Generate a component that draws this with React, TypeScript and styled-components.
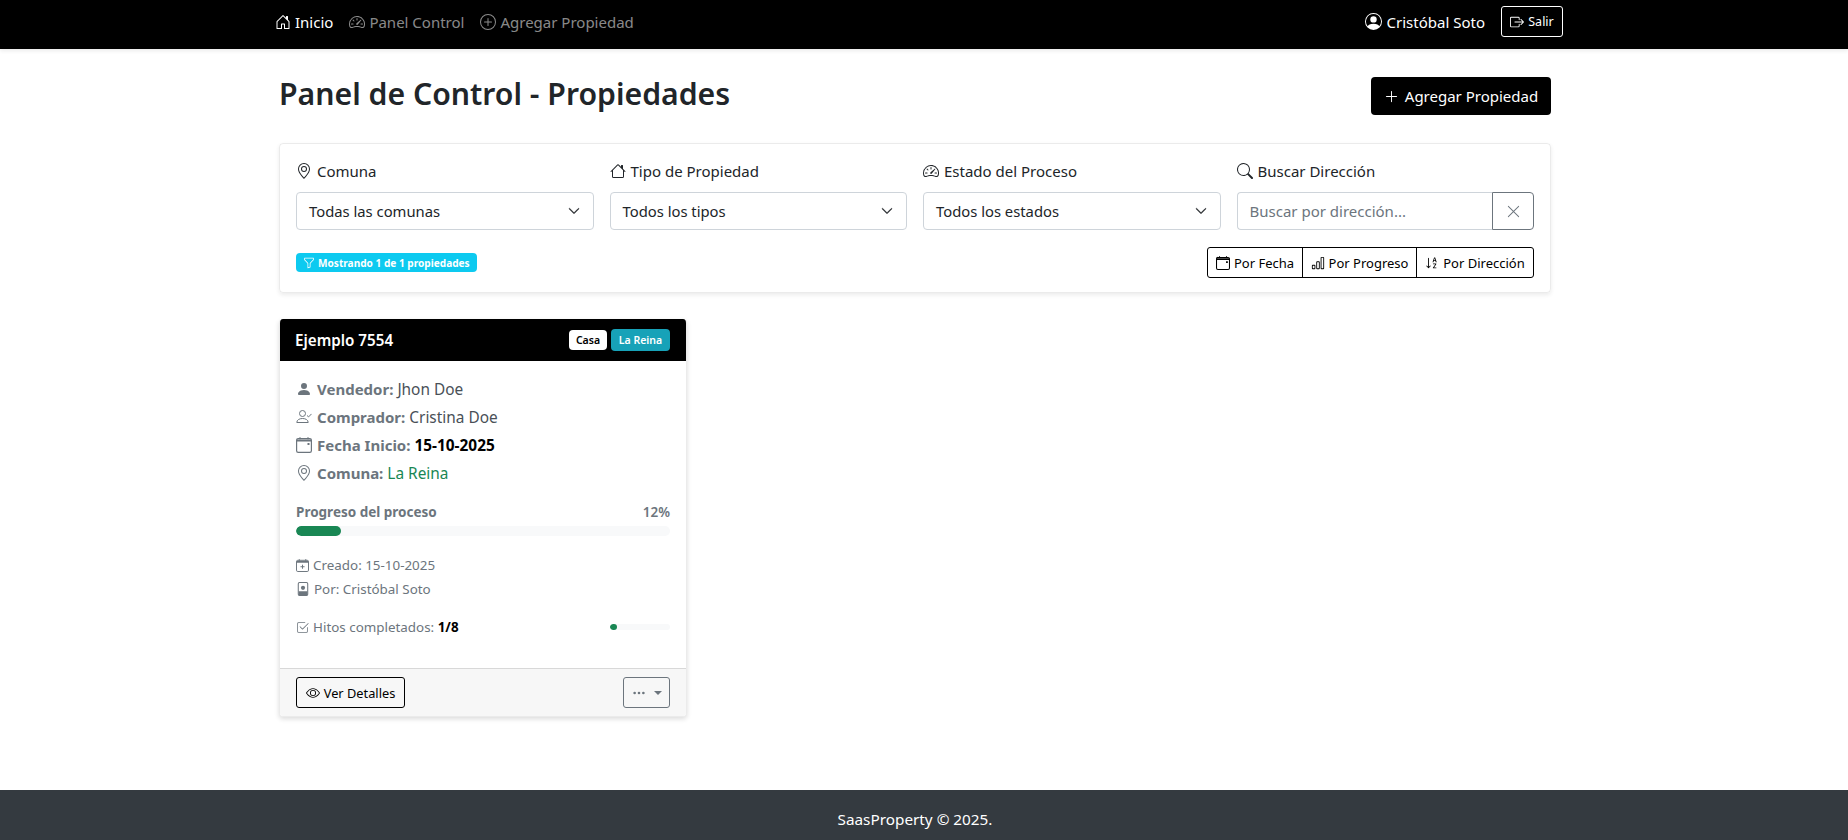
import React from 'react';
import styled, { createGlobalStyle } from 'styled-components';
import {
  BsBarChart,
  BsBoxArrowRight,
  BsCheck2Square,
  BsChevronDown,
  BsEye,
  BsFunnel,
  BsGeoAlt,
  BsHouse,
  BsHouseDoor,
  BsPersonCircle,
  BsPersonFill,
  BsPlusCircle,
  BsPlusLg,
  BsSearch,
  BsSortAlphaDown,
  BsSpeedometer2,
  BsThreeDots,
  BsXLg,
} from 'react-icons/bs';

const colors = {
  black: '#000',
  text: '#212529',
  muted: '#6c757d',
  border: '#ced4da',
  success: '#198754',
  track: '#f8f9fa',
};

const GlobalStyle = createGlobalStyle`
  * { box-sizing: border-box; }
  html, body { margin: 0; padding: 0; height: 100%; }
  body {
    font-family: "Noto Sans", "Open Sans", "Liberation Sans", sans-serif;
    font-size: 15px;
    color: ${colors.text};
    background: #fff;
  }
  #root { height: 840px; }
`;

type IconProps = { size: number };

// the calendar in the reference has a heavy top band, which the package's one lacks
function CalendarIcon({ size }: IconProps) {
  return (
    <svg width={size} height={size} viewBox="0 0 16 16" fill="none" stroke="currentColor">
      <rect x="0.6" y="1.6" width="14.8" height="13.8" rx="1.6" strokeWidth="1.2" />
      <path d="M0.6 3.6h14.8" strokeWidth="2" />
      <path d="M4 0.2v2M12 0.2v2" strokeWidth="1.2" />
      <path d="M11.5 6h2v2h-2z" fill="currentColor" stroke="none" />
    </svg>
  );
}

function CalendarPlusIcon({ size }: IconProps) {
  return (
    <svg width={size} height={size} viewBox="0 0 16 16" fill="none" stroke="currentColor">
      <rect x="0.6" y="1.6" width="14.8" height="13.8" rx="1.6" strokeWidth="1.2" />
      <path d="M0.6 3.6h14.8" strokeWidth="2" />
      <path d="M4 0.2v2M12 0.2v2" strokeWidth="1.2" />
      <path d="M8 7v5M5.5 9.5h5" strokeWidth="1.2" />
    </svg>
  );
}

function PersonCheckIcon({ size }: IconProps) {
  return (
    <svg width={size} height={size} viewBox="0 0 16 16" fill="none" stroke="currentColor" strokeWidth="1">
      <circle cx="6.5" cy="4.5" r="3" />
      <path d="M0.8 13.5c0-2.6 2.6-4 5.7-4s5.7 1.4 5.7 4z" />
      <path d="M11 6.5l1.6 1.4 2.9-3" />
    </svg>
  );
}

function PersonPortraitIcon({ size }: IconProps) {
  return (
    <svg width={size} height={size} viewBox="0 0 16 16" fill="none" stroke="currentColor">
      <rect x="2.6" y="0.6" width="10.8" height="14.8" rx="1.4" strokeWidth="1.2" />
      <circle cx="8" cy="6.6" r="2.4" fill="currentColor" stroke="none" />
      <path d="M3 10.5h10v4.5H3z" fill="currentColor" stroke="none" />
    </svg>
  );
}

const Page = styled.div`
  display: flex;
  flex-direction: column;
  height: 840px;
`;

const Navbar = styled.nav`
  height: 49px;
  background: ${colors.black};
  box-shadow: 0 2px 4px rgba(0, 0, 0, 0.08);
  padding: 0 285px 6px 267px;
  display: flex;
  align-items: center;
  justify-content: space-between;
`;

const NavGroup = styled.div`
  display: flex;
  align-items: center;
`;

const NavLink = styled.a<{ $active?: boolean }>`
  display: flex;
  align-items: center;
  gap: 4px;
  padding: 0 8px;
  color: ${(p) => (p.$active ? '#fff' : 'rgba(255,255,255,.55)')};
  white-space: nowrap;
`;

const UserName = styled.span`
  display: flex;
  align-items: center;
  gap: 5px;
  color: #fff;
  margin-right: 16px;
`;

const LogoutButton = styled.button`
  height: 31px;
  width: 62px;
  display: flex;
  align-items: center;
  justify-content: center;
  gap: 4px;
  background: transparent;
  border: 1px solid #fff;
  border-radius: 3px;
  color: #fff;
  font: inherit;
  font-size: 12.5px;
  padding: 0;
`;

const Main = styled.main`
  flex: 1;
  padding: 28px 297px 0 279px;
`;

const TitleRow = styled.div`
  display: flex;
  align-items: center;
  justify-content: space-between;
  height: 38px;
  margin-bottom: 28px;
`;

const Title = styled.h1`
  margin: 0 0 4px;
  font-size: 30.2px;
  font-weight: 600;
  line-height: 1.2;
`;

const PrimaryButton = styled.button`
  width: 180px;
  height: 38px;
  display: flex;
  align-items: center;
  justify-content: center;
  gap: 6px;
  background: ${colors.black};
  color: #fff;
  border: 0;
  border-radius: 4px;
  font: inherit;
  padding: 0;
`;

const FilterPanel = styled.section`
  height: 150px;
  border: 1px solid rgba(0, 0, 0, 0.08);
  border-radius: 4px;
  box-shadow: 0 2px 4px rgba(0, 0, 0, 0.08);
  padding: 16px;
`;

const FilterGrid = styled.div`
  display: grid;
  grid-template-columns: repeat(4, 1fr);
  column-gap: 16px;
`;

const FilterLabel = styled.label`
  display: flex;
  align-items: center;
  gap: 5px;
  height: 24px;
  margin-top: -1px;
  margin-bottom: 9px;
  font-size: 15px;
`;

const SelectBox = styled.div`
  height: 38px;
  display: flex;
  align-items: center;
  justify-content: space-between;
  padding: 0 13px 0 12px;
  border: 1px solid ${colors.border};
  border-radius: 4px;
  font-size: 14.8px;

  svg {
    stroke: currentColor;
    stroke-width: 0.8;
  }
`;

const SearchGroup = styled.div`
  display: flex;
  height: 38px;
`;

const SearchInput = styled.div`
  flex: 1;
  display: flex;
  align-items: center;
  padding: 0 12px;
  border: 1px solid ${colors.border};
  border-right: 0;
  border-radius: 4px 0 0 4px;
  color: ${colors.muted};
`;

const ClearButton = styled.button`
  width: 42px;
  display: flex;
  align-items: center;
  justify-content: center;
  background: #fff;
  border: 1px solid ${colors.muted};
  border-radius: 0 4px 4px 0;
  color: ${colors.muted};
  padding: 0;
`;

const FilterFooter = styled.div`
  display: flex;
  align-items: center;
  justify-content: space-between;
  margin-top: 17px;
`;

const InfoBadge = styled.span`
  display: flex;
  align-items: center;
  gap: 3px;
  width: 181px;
  height: 19px;
  padding-left: 7px;
  background: #0dcaf0;
  border-radius: 4px;
  color: #fff;
  font-size: 10.1px;
  font-weight: 700;
  white-space: nowrap;
`;

const SortGroup = styled.div`
  display: flex;
  height: 31px;
  border: 1px solid ${colors.black};
  border-radius: 3px;
`;

const SortButton = styled.button<{ $width: number }>`
  width: ${(p) => p.$width}px;
  display: flex;
  align-items: center;
  justify-content: center;
  gap: 4px;
  background: transparent;
  border: 0;
  border-left: 1px solid ${colors.black};
  color: ${colors.black};
  font: inherit;
  font-size: 13px;
  padding: 0;
  white-space: nowrap;

  &:first-child {
    border-left: 0;
  }
`;

const Card = styled.article`
  width: 408px;
  height: 398px;
  margin-top: 26px;
  display: flex;
  flex-direction: column;
  border-radius: 4px;
  overflow: hidden;
  border: 1px solid rgba(0, 0, 0, 0.08);
  border-top: 0;
  box-shadow: 0 2px 5px rgba(0, 0, 0, 0.14);
`;

const CardHeader = styled.header`
  height: 42px;
  background: ${colors.black};
  display: flex;
  align-items: center;
  justify-content: space-between;
  padding: 0 16px 0 15px;
`;

const CardTitle = styled.h5`
  margin: 0 0 1px;
  color: #fff;
  font-size: 15.2px;
  font-weight: 600;
`;

const BadgeRow = styled.div`
  display: flex;
  align-items: center;
  gap: 4px;
`;

const Tag = styled.span<{ $bg: string; $fg: string; $width: number; $height: number }>`
  display: flex;
  align-items: center;
  justify-content: center;
  width: ${(p) => p.$width}px;
  height: ${(p) => p.$height}px;
  background: ${(p) => p.$bg};
  color: ${(p) => p.$fg};
  border-radius: 4px;
  font-size: 10.5px;
  font-weight: 600;
`;

const CardBody = styled.div`
  flex: 1;
  padding: 14px 16px 0;
`;

const InfoRow = styled.div`
  display: flex;
  align-items: center;
  gap: 5px;
  height: 28px;
  color: ${colors.muted};
  white-space: pre;
  font-size: 15.4px;
`;

const InfoKey = styled.strong`
  font-weight: 700;
  font-size: 15px;
`;

const InfoValue = styled.span<{ $color?: string; $bold?: boolean }>`
  color: ${(p) => p.$color ?? '#495057'};
  font-weight: ${(p) => (p.$bold ? 700 : 400)};
`;

const ProgressHead = styled.div`
  display: flex;
  justify-content: space-between;
  align-items: center;
  height: 20px;
  margin-top: 15px;
  color: ${colors.muted};
  font-size: 13.5px;
  font-weight: 700;
`;

const ProgressValue = styled.span`
  font-weight: 600;
`;

const Track = styled.div<{ $height: number }>`
  height: ${(p) => p.$height}px;
  border-radius: ${(p) => p.$height / 2}px;
  background: ${colors.track};
  overflow: hidden;
`;

const Fill = styled.div`
  height: 100%;
  border-radius: inherit;
  background: ${colors.success};
`;

const MainTrack = styled(Track)`
  margin-top: 4px;
  margin-bottom: 17px;
`;

const MetaRow = styled.div`
  display: flex;
  align-items: center;
  gap: 4px;
  height: 24px;
  color: ${colors.muted};
  font-size: 13.4px;
`;

const MilestoneRow = styled(MetaRow)`
  justify-content: space-between;
  margin-top: 14px;
`;

const MilestoneText = styled.span`
  display: flex;
  align-items: center;
  gap: 4px;
  white-space: pre;
`;

const MiniTrack = styled(Track)`
  width: 60px;
`;

const CardFooter = styled.footer`
  height: 48px;
  display: flex;
  align-items: center;
  justify-content: space-between;
  padding: 0 16px;
  background: #f7f7f7;
  border-top: 1px solid #d8d8d8;
`;

const OutlineButton = styled.button`
  width: 109px;
  height: 31px;
  display: flex;
  align-items: center;
  justify-content: center;
  gap: 4px;
  background: transparent;
  border: 1px solid ${colors.black};
  border-radius: 3px;
  color: ${colors.black};
  font: inherit;
  font-size: 12.8px;
  padding: 0;
`;

const MoreButton = styled.button`
  width: 47px;
  height: 31px;
  display: flex;
  align-items: center;
  justify-content: center;
  gap: 8px;
  background: transparent;
  border: 1px solid ${colors.muted};
  border-radius: 3px;
  color: ${colors.muted};
  padding: 0;
`;

const Caret = styled.span`
  width: 0;
  height: 0;
  border-left: 4px solid transparent;
  border-right: 4px solid transparent;
  border-top: 4px solid ${colors.muted};
`;

const PageFooter = styled.footer`
  height: 50px;
  background: #343a40;
  color: #fff;
  display: flex;
  align-items: center;
  justify-content: center;
  padding: 7px 18px 0 0;
  font-size: 15.3px;
`;

export default function App() {
  return (
    <Page>
      <GlobalStyle />
      <Navbar>
        <NavGroup>
          <NavLink $active>
            <BsHouseDoor size={16} />
            Inicio
          </NavLink>
          <NavLink>
            <BsSpeedometer2 size={16} />
            Panel Control
          </NavLink>
          <NavLink>
            <BsPlusCircle size={16} />
            Agregar Propiedad
          </NavLink>
        </NavGroup>
        <NavGroup>
          <UserName>
            <BsPersonCircle size={17} />
            Cristóbal Soto
          </UserName>
          <LogoutButton>
            <BsBoxArrowRight size={14} />
            Salir
          </LogoutButton>
        </NavGroup>
      </Navbar>

      <Main>
        <TitleRow>
          <Title>Panel de Control - Propiedades</Title>
          <PrimaryButton>
            <BsPlusLg size={15} />
            Agregar Propiedad
          </PrimaryButton>
        </TitleRow>

        <FilterPanel>
          <FilterGrid>
            <div>
              <FilterLabel>
                <BsGeoAlt size={16} />
                Comuna
              </FilterLabel>
              <SelectBox>
                Todas las comunas
                <BsChevronDown size={12} />
              </SelectBox>
            </div>
            <div>
              <FilterLabel>
                <BsHouse size={16} />
                Tipo de Propiedad
              </FilterLabel>
              <SelectBox>
                Todos los tipos
                <BsChevronDown size={12} />
              </SelectBox>
            </div>
            <div>
              <FilterLabel>
                <BsSpeedometer2 size={16} />
                Estado del Proceso
              </FilterLabel>
              <SelectBox>
                Todos los estados
                <BsChevronDown size={12} />
              </SelectBox>
            </div>
            <div>
              <FilterLabel>
                <BsSearch size={16} />
                Buscar Dirección
              </FilterLabel>
              <SearchGroup>
                <SearchInput>Buscar por dirección...</SearchInput>
                <ClearButton>
                  <BsXLg size={15} />
                </ClearButton>
              </SearchGroup>
            </div>
          </FilterGrid>
          <FilterFooter>
            <InfoBadge>
              <BsFunnel size={12} />
              Mostrando 1 de 1 propiedades
            </InfoBadge>
            <SortGroup>
              <SortButton $width={94}>
                <CalendarIcon size={14} />
                Por Fecha
              </SortButton>
              <SortButton $width={114}>
                <BsBarChart size={14} />
                Por Progreso
              </SortButton>
              <SortButton $width={117}>
                <BsSortAlphaDown size={14} />
                Por Dirección
              </SortButton>
            </SortGroup>
          </FilterFooter>
        </FilterPanel>

        <Card>
          <CardHeader>
            <CardTitle>Ejemplo 7554</CardTitle>
            <BadgeRow>
              <Tag $bg="#fff" $fg="#000" $width={38} $height={20}>
                Casa
              </Tag>
              <Tag $bg="#17a2b8" $fg="#fff" $width={59} $height={22}>
                La Reina
              </Tag>
            </BadgeRow>
          </CardHeader>
          <CardBody>
            <InfoRow>
              <BsPersonFill size={16} />
              <span>
                <InfoKey>Vendedor:</InfoKey> <InfoValue>Jhon Doe</InfoValue>
              </span>
            </InfoRow>
            <InfoRow>
              <PersonCheckIcon size={16} />
              <span>
                <InfoKey>Comprador:</InfoKey> <InfoValue>Cristina Doe</InfoValue>
              </span>
            </InfoRow>
            <InfoRow>
              <CalendarIcon size={16} />
              <span>
                <InfoKey>Fecha Inicio:</InfoKey>{' '}
                <InfoValue $color="#000" $bold>
                  15-10-2025
                </InfoValue>
              </span>
            </InfoRow>
            <InfoRow>
              <BsGeoAlt size={16} />
              <span>
                <InfoKey>Comuna:</InfoKey> <InfoValue $color={colors.success}>La Reina</InfoValue>
              </span>
            </InfoRow>

            <ProgressHead>
              <span>Progreso del proceso</span>
              <ProgressValue>12%</ProgressValue>
            </ProgressHead>
            <MainTrack $height={10}>
              <Fill style={{ width: '12%' }} />
            </MainTrack>

            <MetaRow>
              <CalendarPlusIcon size={13} />
              Creado: 15-10-2025
            </MetaRow>
            <MetaRow>
              <PersonPortraitIcon size={14} />
              Por: Cristóbal Soto
            </MetaRow>
            <MilestoneRow>
              <MilestoneText>
                <BsCheck2Square size={13} />
                <span>
                  Hitos completados: <InfoValue $color="#000" $bold>1/8</InfoValue>
                </span>
              </MilestoneText>
              <MiniTrack $height={6}>
                <Fill style={{ width: '12%' }} />
              </MiniTrack>
            </MilestoneRow>
          </CardBody>
          <CardFooter>
            <OutlineButton>
              <BsEye size={14} />
              Ver Detalles
            </OutlineButton>
            <MoreButton>
              <BsThreeDots size={14} />
              <Caret />
            </MoreButton>
          </CardFooter>
        </Card>
      </Main>

      <PageFooter>SaasProperty © 2025.</PageFooter>
    </Page>
  );
}
